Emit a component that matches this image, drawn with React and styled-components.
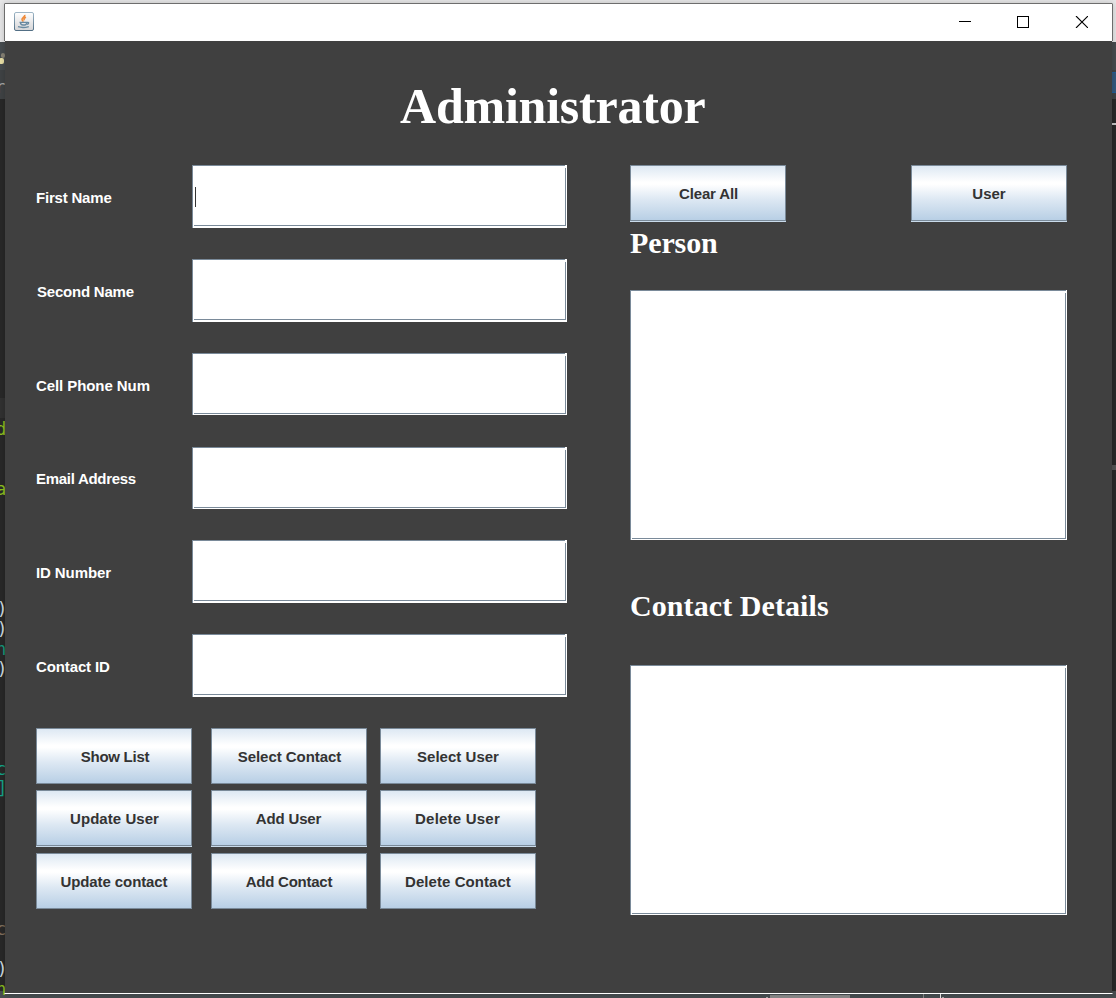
import React from "react";
import styled, { createGlobalStyle } from "styled-components";

const Global = createGlobalStyle`
  * { box-sizing: border-box; }
  html, body { margin: 0; height: 998px; overflow: hidden; background: #2b2b2b; }
`;

const Desktop = styled.div`
  position: relative;
  width: 1116px;
  height: 998px;
  padding: 3px 3px 0 4px;
  overflow: hidden;
  background: linear-gradient(#e8e8e9 0 42px, #484d50 42px 70px, #414446 70px 99px, #292929 99px 991px, #484e51 991px);
`;

const Scrap = styled.span`
  position: absolute;
  left: ${(p) => p.$x}px;
  top: ${(p) => p.$y}px;
  color: ${(p) => p.$color};
  font: 17px/20px "DejaVu Sans Mono", monospace;
`;

const Patch = styled.i`
  position: absolute;
  left: ${(p) => p.$x}px;
  top: ${(p) => p.$y}px;
  width: ${(p) => p.$w}px;
  height: ${(p) => p.$h}px;
  border-radius: ${(p) => p.$r || 0}px;
  background: ${(p) => p.$color};
`;

const Window = styled.main`
  position: relative;
  display: flex;
  flex-direction: column;
  width: 1109px;
  height: 991px;
  border: 1px solid transparent;
  border-top-color: #6d6d6d;
  border-bottom-color: #fff;
  background: #404040 padding-box;
  box-shadow: 0 0 7px rgba(0, 0, 0, 0.2);
`;

const TitleBar = styled.header`
  display: flex;
  align-items: center;
  justify-content: space-between;
  height: 37px;
  flex: none;
  padding: 0 24px 2px 9px;
  background: #fff;
  box-shadow: 1px 0 #6d6d6d, -1px 0 #6d6d6d;
  svg { display: block; }
`;

const Controls = styled.div`
  display: flex;
  gap: 46px;
`;

const Title = styled.h1`
  margin: 0;
  height: 124px;
  padding: 37px 0 0 395px;
  color: #fff;
  font: bold 50px/56px "Liberation Serif", serif;
  letter-spacing: -0.22px;
`;

const Body = styled.div`
  display: flex;
  gap: 63px;
  padding-left: 31px;
`;

const Form = styled.section`
  width: 531px;
`;

const Field = styled.label`
  display: flex;
  height: ${(p) => p.$pitch}px;
`;

const Caption = styled.span`
  width: 156px;
  height: 62px;
  padding-left: ${(p) => p.$indent || 0}px;
  color: #fff;
  font: bold 15px/${(p) => p.$line || 65}px "Liberation Sans", sans-serif;
  letter-spacing: ${(p) => p.$track}px;
`;

const Sunken = styled.div`
  position: relative;
  width: ${(p) => p.$w}px;
  height: ${(p) => p.$h}px;
  padding: 21px 0 0 2px;
  background: #fff;
  border: solid #7a8a99;
  border-width: 1px 0 0 1px;
  &::before {
    content: "";
    position: absolute;
    top: -1px;
    right: 0;
    width: ${(p) => (p.$thin ? 1 : 2)}px;
    height: 1px;
    background: #fff;
  }
  &::after {
    content: "";
    position: absolute;
    inset: 2px 1px ${(p) => (p.$h === 63 ? 2 : 1)}px 1px;
    border: solid #7a8a99;
    border-width: 0 1px 1px 0;
  }
`;

const Caret = styled.i`
  display: block;
  width: 1px;
  height: 20px;
  background: #333;
`;

const ButtonGrid = styled.div`
  display: grid;
  grid-template-columns: 175px 169px 156px;
  grid-template-rows: 56px 57px 56px;
  row-gap: 6px;
`;

const Button = styled.button`
  width: 156px;
  height: 56px;
  padding: 1px 0 0 1px;
  border: 1px solid #7a8a99;
  border-radius: 0;
  background: linear-gradient(#dde8f3 0%, #fff 30%, #fff 34%, #dde8f3 62%, #b8cfe5 100%);
  box-shadow: ${(p) => (p.$edge ? "0 1px #c9dbeb" : "none")};
  color: #333;
  font: bold 15px/53px "Liberation Sans", sans-serif;
  letter-spacing: ${(p) => p.$track || 0}px;
  text-indent: ${(p) => p.$shift || 0}px;
  white-space: nowrap;
`;

const Side = styled.section`
  width: 437px;
`;

const Actions = styled.div`
  display: flex;
  justify-content: space-between;
  height: 57px;
`;

const Heading = styled.h2`
  margin: 0;
  height: ${(p) => p.$h}px;
  padding-top: ${(p) => p.$top}px;
  color: #fff;
  font: bold 30px/34px "Liberation Serif", serif;
  letter-spacing: ${(p) => p.$track}px;
`;

const fields = [
  { label: "First Name", h: 63, pitch: 94, track: -0.2, caret: true },
  { label: "Second Name", h: 63, pitch: 94, track: -0.22, indent: 1 },
  { label: "Cell Phone Num", h: 62, pitch: 94, track: -0.08 },
  { label: "Email Address", h: 62, pitch: 93, track: -0.29, line: 63 },
  { label: "ID Number", h: 63, pitch: 94, track: -0.1 },
  { label: "Contact ID", h: 63, pitch: 94, track: -0.12 },
];

const commands = [
  ["Show List", -0.27, 1], ["Select Contact", -0.05, 0], ["Select User", 0.02, -1],
  ["Update User", 0.04, 0], ["Add User", -0.15, -2], ["Delete User", 0.22, -2],
  ["Update contact", -0.1, -1], ["Add Contact", -0.25, -1], ["Delete Contact", 0.06, -1],
];

const scraps = [
  ["r", -5, 77, "#a9a9a9"], ["d", -4, 419, "#8fc31f"], ["a", -4, 479, "#8fc31f"],
  [")", -3, 599, "#d8e2ea"], [")", -3, 619, "#d8e2ea"], ["n", -4, 639, "#169d80"],
  [")", -3, 659, "#d8e2ea"], ["c", -4, 759, "#16a88c"], ["]", -3, 778, "#16a88c"],
  ["c", -4, 919, "#83725f"], [")", -3, 959, "#d8e2ea"], ["n", -4, 979, "#8fc31f"],
];

const patches = [
  [1, 53, 4, 5, "#8a8578", 2], [-1, 58, 5, 6, "#ede3a8", 2], [0, 398, 5, 20, "#323232"],
  [1112, 72, 4, 21, "#345a80"], [1112, 72, 4, 1, "#225f9c"], [1112, 92, 4, 1, "#225f9c"],
  [1112, 123, 4, 2, "#c8c8c8"], [1112, 465, 4, 5, "#555"],
  [770, 995, 80, 3, "#8a8a8a"], [923, 994, 1, 4, "#888"], [940, 994, 1, 4, "#eee"],
  [766, 997, 2, 1, "#aaa"], [942, 997, 2, 1, "#aaa"],
];

function JavaIcon() {
  return (
    <svg width="20" height="19" viewBox="0 0 20 19" fill="none">
      <defs>
        <linearGradient id="tile" x1="0" y1="0" x2="0" y2="1">
          <stop stopColor="#fff" />
          <stop offset="1" stopColor="#d5d5d7" />
        </linearGradient>
        <linearGradient id="rim" x1="0" y1="0" x2="0" y2="1">
          <stop stopColor="#9fb6c6" />
          <stop offset="1" stopColor="#526f85" />
        </linearGradient>
      </defs>
      <rect x=".5" y=".5" width="19" height="18" rx="1.5" fill="url(#tile)" stroke="url(#rim)" />
      <path d="M10.8 2.8C11.2 5 7.8 5.6 8 7.5C8.1 8.5 9 8.8 9.2 9.7M12 5.3C10 6.2 9.4 7.2 10.5 8.3" stroke="#ee8b3c" strokeWidth="1.6" />
      <path d="M5.5 10.3H13M6.3 10.5Q6.8 13 8.8 13H11Q12.6 12.7 12.7 10.5M13 10.3Q15.4 10.1 14.4 11.7L13 12.4M4 14.7Q9 16.3 14.8 14.6" stroke="#6889a0" strokeWidth="1.3" />
    </svg>
  );
}

export default function App() {
  return (
    <Desktop>
      <Global />
      {patches.map(([x, y, w, h, color, r], i) => (
        <Patch key={i} $x={x} $y={y} $w={w} $h={h} $color={color} $r={r} />
      ))}
      {scraps.map(([text, x, y, color]) => (
        <Scrap key={y} $x={x} $y={y} $color={color}>{text}</Scrap>
      ))}
      <Window>
        <TitleBar>
          <JavaIcon />
          <Controls>
            <svg width="12" height="12" shapeRendering="crispEdges"><path d="M0 5.5H12" stroke="#000" /></svg>
            <svg width="12" height="12" shapeRendering="crispEdges"><rect x=".5" y=".5" width="11" height="11" fill="none" stroke="#000" /></svg>
            <svg width="13" height="12"><path d="M1 0L13 12M13 0L1 12" stroke="#000" strokeWidth="1.1" /></svg>
          </Controls>
        </TitleBar>
        <Title>Administrator</Title>
        <Body>
          <Form>
            {fields.map((f) => (
              <Field key={f.label} $pitch={f.pitch}>
                <Caption $indent={f.indent} $track={f.track} $line={f.line}>{f.label}</Caption>
                <Sunken $w={375} $h={f.h}>{f.caret && <Caret />}</Sunken>
              </Field>
            ))}
            <ButtonGrid>
              {commands.map(([name, track, shift], i) => (
                <Button key={name} $edge={i > 2 && i < 6} $track={track} $shift={shift}>{name}</Button>
              ))}
            </ButtonGrid>
          </Form>
          <Side>
            <Actions>
              <Button $edge $track={-0.15}>Clear All</Button>
              <Button $edge $shift={-1}>User</Button>
            </Actions>
            <Heading $h={68} $top={4} $track={-0.12}>Person</Heading>
            <Sunken $thin $w={437} $h={250} />
            <Heading $h={125} $top={49} $track={0.08}>Contact Details</Heading>
            <Sunken $thin $w={437} $h={250} />
          </Side>
        </Body>
      </Window>
    </Desktop>
  );
}
